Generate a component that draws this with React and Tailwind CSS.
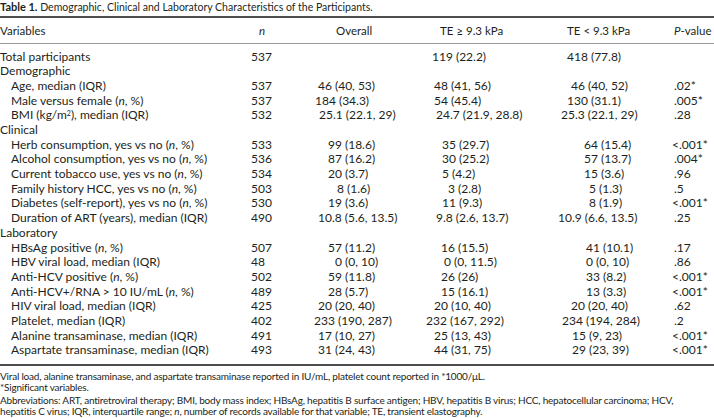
import React from "react";

const I = ({ children }) => <span className="italic">{children}</span>;
const NP = <>(<I>n</I>, %)</>;

const rows = [
  { label: "Total participants", n: "537", o: "", a: "119 (22.2)", b: "418 (77.8)", p: "", po: "pl-0", pa: "pl-[6px]", pb: "pl-[9px]", top: true },
  { section: "Demographic" },
  { label: <>Age, median (IQR)</>, n: "537", o: "46 (40, 53)", a: "48 (41, 56)", b: "46 (40, 52)", p: ".02*", po: "pl-[4px]", pa: "pl-[8px]", pb: "pl-[13px]" },
  { label: <>Male versus female {NP}</>, n: "537", o: "184 (34.3)", a: "54 (45.4)", b: "130 (31.1)", p: ".005*", po: "pl-[1px]", pa: "pl-[8px]", pb: "pl-[9px]" },
  { label: <>BMI (kg/m<sup className="text-[7px]">2</sup>), median (IQR)</>, n: "532", o: "25.1 (22.1, 29)", a: "24.7 (21.9, 28.8)", b: "25.3 (22.1, 29)", p: ".28", po: "pl-[5px]", pa: "pl-[10px]", pb: "pl-[3px]" },
  { section: "Clinical" },
  { label: <>Herb consumption, yes vs no {NP}</>, n: "533", o: "99 (18.6)", a: "35 (29.7)", b: "64 (15.4)", p: "<.001*", po: "pl-[14px]", pa: "pl-[16px]", pb: "pl-[26px]" },
  { label: <>Alcohol consumption, yes vs no {NP}</>, n: "536", o: "87 (16.2)", a: "30 (25.2)", b: "57 (13.7)", p: ".004*", po: "pl-[14px]", pa: "pl-[16px]", pb: "pl-[26px]" },
  { label: <>Current tobacco use, yes vs no {NP}</>, n: "534", o: "20 (3.7)", a: "5 (4.2)", b: "15 (3.6)", p: ".96", po: "pl-[14px]", pa: "pl-[16px]", pb: "pl-[26px]" },
  { label: <>Family history HCC, yes vs no {NP}</>, n: "503", o: "8 (1.6)", a: "3 (2.8)", b: "5 (1.3)", p: ".5", po: "pl-[23px]", pa: "pl-[22px]", pb: "pl-[31px]" },
  { label: <>Diabetes (self-report), yes vs no {NP}</>, n: "530", o: "19 (3.6)", a: "11 (9.3)", b: "8 (1.9)", p: "<.001*", po: "pl-[14px]", pa: "pl-[16px]", pb: "pl-[31px]" },
  { label: <>Duration of ART (years), median (IQR)</>, n: "490", o: "10.8 (5.6, 13.5)", a: "9.8 (2.6, 13.7)", b: "10.9 (6.6, 13.5)", p: ".25", po: "pl-[4px]", pa: "pl-[10px]", pb: "pl-0" },
  { section: "Laboratory" },
  { label: <>HBsAg positive {NP}</>, n: "507", o: "57 (11.2)", a: "16 (15.5)", b: "41 (10.1)", p: ".17", po: "pl-[14px]", pa: "pl-[15px]", pb: "pl-[28px]" },
  { label: <>HBV viral load, median (IQR)</>, n: "48", o: "0 (0, 10)", a: "0 (0, 11.5)", b: "0 (0, 10)", p: ".86", po: "pl-[21px]", pa: "pl-[18px]", pb: "pl-[28px]" },
  { label: <>Anti-HCV positive {NP}</>, n: "502", o: "59 (11.8)", a: "26 (26)", b: "33 (8.2)", p: "<.001*", po: "pl-[14px]", pa: "pl-[15px]", pb: "pl-[28px]" },
  { label: <>Anti-HCV+/RNA &gt; 10 IU/mL {NP}</>, n: "489", o: "28 (5.7)", a: "15 (16.1)", b: "13 (3.3)", p: "<.001*", po: "pl-[14px]", pa: "pl-[15px]", pb: "pl-[28px]" },
  { label: <>HIV viral load, median (IQR)</>, n: "425", o: "20 (20, 40)", a: "20 (10, 40)", b: "20 (20, 40)", p: ".62", po: "pl-[4px]", pa: "pl-[8px]", pb: "pl-[13px]" },
  { label: <>Platelet, median (IQR)</>, n: "402", o: "233 (190, 287)", a: "232 (167, 292)", b: "234 (194, 284)", p: ".2", po: "pl-0", pa: "pl-0", pb: "pl-[4px]" },
  { label: <>Alanine transaminase, median (IQR)</>, n: "491", o: "17 (10, 27)", a: "25 (13, 43)", b: "15 (9, 23)", p: "<.001*", po: "pl-[4px]", pa: "pl-[8px]", pb: "pl-[14px]" },
  { label: <>Aspartate transaminase, median (IQR)</>, n: "493", o: "31 (24, 43)", a: "44 (31, 75)", b: "29 (23, 39)", p: "<.001*", po: "pl-[4px]", pa: "pl-[8px]", pb: "pl-[14px]" },
];

const grid = "grid grid-cols-[251px_63px_112px_132px_116px_40px] items-center";

export default function App() {
  return (
    <div className="w-[714px] h-[418px] bg-white text-[#231f20] font-['Lato',sans-serif] overflow-hidden">
      <p className="text-[10.5px] leading-[13px] whitespace-nowrap">
        <span className="font-bold text-[11px]">Table 1.</span> Demographic, Clinical and Laboratory Characteristics of the Participants.
      </p>
      <div className="mt-[2px] border-t-2 border-[#4d4d4d]">
        <div className={`${grid} h-[25px] text-[11.5px]`}>
          <div>Variables</div>
          <div className="pl-[8px] italic">n</div>
          <div className="pl-[22px]">Overall</div>
          <div className="pl-[14px]">TE ≥ 9.3 kPa</div>
          <div className="pl-[9px]">TE &lt; 9.3 kPa</div>
          <div className="whitespace-nowrap"><I>P</I>-value</div>
        </div>
      </div>
      <div className="border-t border-[#9a9a9a] pt-[5.6px] pb-[6px] text-[12px] leading-[14.7px]">
        {rows.map((r, i) =>
          r.section ? (
            <div key={i} className="h-[14.7px]">{r.section}</div>
          ) : (
            <div key={i} className={`${grid} h-[14.7px] whitespace-nowrap`}>
              <div className={r.top ? "" : "pl-[11px]"}>{r.label}</div>
              <div>{r.n}</div>
              <div className={r.po}>{r.o}</div>
              <div className={r.pa}>{r.a}</div>
              <div className={r.pb}>{r.b}</div>
              <div className={r.p.startsWith("<") ? "-ml-[2px]" : ""}>{r.p}</div>
            </div>
          )
        )}
      </div>
      <div className="border-t-2 border-[#4d4d4d] pt-[5px] text-[10px] tracking-[-0.2px] leading-[11px] whitespace-nowrap">
        <p>Viral load, alanine transaminase, and aspartate transaminase reported in IU/mL, platelet count reported in *1000/μL.</p>
        <p>*Significant variables.</p>
        <p className="mt-[1.5px]">
          Abbreviations: ART, antiretroviral therapy; BMI, body mass index; HBsAg, hepatitis B surface antigen; HBV, hepatitis B virus; HCC, hepatocellular carcinoma; HCV,
        </p>
        <p>
          hepatitis C virus; IQR, interquartile range; <I>n</I>, number of records available for that variable; TE, transient elastography.
        </p>
      </div>
    </div>
  );
}
